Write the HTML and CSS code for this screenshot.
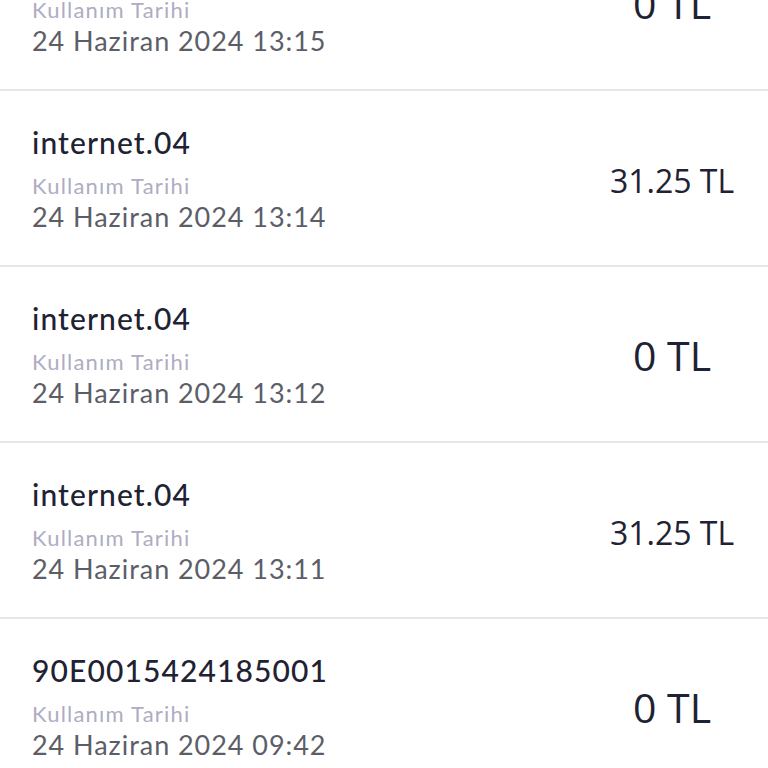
FILE: index.html
```html
<!DOCTYPE html>
<html lang="tr">
<head>
  <meta charset="UTF-8">
  <meta name="viewport" content="width=device-width, initial-scale=1.0">
  <title>Kullanım Geçmişi</title>
  <link rel="stylesheet" href="styles.css">
</head>
<body>
  <!-- Usage list -->
  <ul class="usage-list">
    <li class="usage-row">
      <div class="usage-info">
        <div class="usage-title">internet.04</div>
        <div class="usage-label">Kullanım Tarihi</div>
        <div class="usage-date">24 Haziran 2024 13:15</div>
      </div>
      <div class="usage-amount big">0 TL</div>
    </li>
    <li class="usage-row">
      <div class="usage-info">
        <div class="usage-title">internet.04</div>
        <div class="usage-label">Kullanım Tarihi</div>
        <div class="usage-date">24 Haziran 2024 13:14</div>
      </div>
      <div class="usage-amount">31.25 TL</div>
    </li>
    <li class="usage-row">
      <div class="usage-info">
        <div class="usage-title">internet.04</div>
        <div class="usage-label">Kullanım Tarihi</div>
        <div class="usage-date">24 Haziran 2024 13:12</div>
      </div>
      <div class="usage-amount big">0 TL</div>
    </li>
    <li class="usage-row">
      <div class="usage-info">
        <div class="usage-title">internet.04</div>
        <div class="usage-label">Kullanım Tarihi</div>
        <div class="usage-date">24 Haziran 2024 13:11</div>
      </div>
      <div class="usage-amount">31.25 TL</div>
    </li>
    <li class="usage-row">
      <div class="usage-info">
        <div class="usage-title">90E0015424185001</div>
        <div class="usage-label">Kullanım Tarihi</div>
        <div class="usage-date">24 Haziran 2024 09:42</div>
      </div>
      <div class="usage-amount big">0 TL</div>
    </li>
  </ul>
</body>
</html>
```

FILE: styles.css
```css
/* General Styles */
:root {
  --text-main: #1f2233;
  --text-muted: #aeadc3;
  --text-date: #5b5e67;
  --divider: #e6e6ea;
}

body {
  margin: 0;
  padding: 0;
  background: #ffffff;
  font-family: 'Lato', 'Noto Sans', sans-serif;
  color: var(--text-main);
  overflow: hidden;
}

/* Usage List */
.usage-list {
  list-style: none;
  margin: -85px 0 0;
  padding: 0;
}

.usage-row {
  display: flex;
  align-items: center;
  justify-content: space-between;
  height: 174px;
  padding: 0 32px;
  border-bottom: 2px solid var(--divider);
}

.usage-info {
  display: flex;
  flex-direction: column;
}

.usage-title {
  font-size: 30px;
  font-weight: 500;
  line-height: 36px;
  letter-spacing: 1.1px;
  margin-bottom: 11px;
}

.usage-label {
  font-size: 22px;
  line-height: 30px;
  letter-spacing: 1.2px;
  color: var(--text-muted);
}

.usage-date {
  font-size: 27px;
  line-height: 32px;
  letter-spacing: 0.95px;
  color: var(--text-date);
}

.usage-amount {
  width: 128px;
  padding-top: 4px;
  text-align: center;
  font-family: 'Open Sans', 'Noto Sans', sans-serif;
  font-size: 32px;
  color: var(--text-main);
}

.usage-amount.big {
  padding-top: 2px;
  font-size: 41px;
}
```
